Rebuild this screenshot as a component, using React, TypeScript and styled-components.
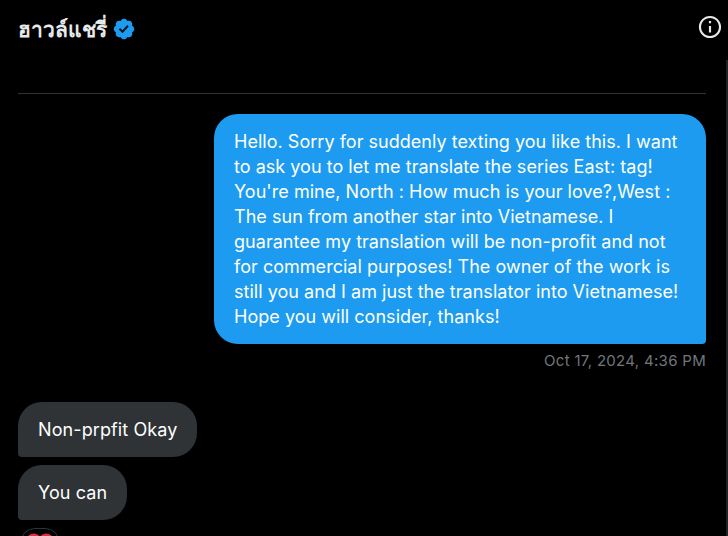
import React from "react"
import styled, { createGlobalStyle } from "styled-components"

const GlobalStyle = createGlobalStyle`
  html, body {
    margin: 0;
    height: 100%;
    overflow: hidden;
    background: #000;
  }
`

const Page = styled.div`
  position: relative;
  width: 728px;
  height: 536px;
  overflow: hidden;
  box-sizing: border-box;
  padding: 0 22px 0 18px;
  background: #000;
  font-family: Inter, "Liberation Sans", sans-serif;
  color: #e7e9ea;
`

const ScrollThumb = styled.div`
  position: absolute;
  top: 60px;
  right: 0;
  bottom: 0;
  width: 2px;
  background: #222327;
`

const Header = styled.header`
  height: 94px;
  box-sizing: border-box;
  padding-top: 15px;
  display: flex;
  justify-content: space-between;
  align-items: flex-start;
  border-bottom: 1px solid #2f3336;
`

const Name = styled.div`
  display: flex;
  align-items: center;
  gap: 5px;
  height: 28px;
  font-family: "Noto Sans", "DejaVu Sans", sans-serif;
  font-size: 21px;
  font-weight: 700;
  color: #e7e9ea;
`

const InfoButton = styled.div`
  width: 26px;
  height: 26px;
  margin: -1px -17px 0 0;
  color: #e7e9ea;
`

const Thread = styled.div`
  display: flex;
  flex-direction: column;
  padding-top: 20px;
`

const Bubble = styled.div<{ $mine?: boolean }>`
  box-sizing: border-box;
  padding: 15px 20px;
  font-size: 18px;
  line-height: 25px;
  letter-spacing: ${p => (p.$mine ? "0.03px" : "0.1px")};
  border-radius: 24px;
  color: #fff;
  width: fit-content;
  background: ${p => (p.$mine ? "#1d9bf0" : "#2f3336")};
  ${p => (p.$mine ? "align-self: flex-end; width: 492px; border-bottom-right-radius: 4px;" : "border-bottom-left-radius: 4px;")}
`

const Time = styled.div`
  align-self: flex-end;
  margin: 8px 0 32px;
  font-size: 15px;
  line-height: 18px;
  letter-spacing: 0.3px;
  color: #71767b;
`

const Incoming = styled.div`
  display: flex;
  flex-direction: column;
  gap: 8px;
`

const Reaction = styled.div`
  width: 40px;
  height: 30px;
  margin-left: 2px;
  box-sizing: border-box;
  border: 1px solid #2f3336;
  border-radius: 16px;
  display: flex;
  justify-content: center;
  padding-top: 3px;
`

const VerifiedBadge = () => (
  <svg width="24" height="24" viewBox="0 0 22 22" aria-label="Verified">
    <path
      fill="#1d9bf0"
      d="M20.396 11c-.018-.646-.215-1.275-.57-1.816-.354-.54-.852-.972-1.438-1.246.223-.607.27-1.264.14-1.897-.131-.634-.437-1.218-.882-1.687-.47-.445-1.053-.75-1.687-.882-.633-.13-1.29-.083-1.897.14-.273-.587-.704-1.086-1.245-1.44S11.647 1.62 11 1.604c-.646.017-1.273.213-1.813.568s-.969.854-1.24 1.44c-.608-.223-1.267-.272-1.902-.14-.635.13-1.22.436-1.69.882-.445.47-.749 1.055-.878 1.688-.13.633-.08 1.29.144 1.896-.587.274-1.087.705-1.443 1.245-.356.54-.555 1.17-.574 1.817.02.647.218 1.276.574 1.817.356.54.856.972 1.443 1.245-.224.606-.274 1.263-.144 1.896.13.634.433 1.218.877 1.688.47.443 1.054.747 1.687.878.633.132 1.29.084 1.897-.136.274.586.705 1.084 1.246 1.439.54.354 1.17.551 1.816.569.647-.016 1.276-.213 1.817-.567s.972-.854 1.245-1.44c.604.239 1.266.296 1.903.164.636-.132 1.22-.447 1.68-.907.46-.46.776-1.044.908-1.681s.075-1.299-.165-1.903c.586-.274 1.084-.705 1.439-1.246.354-.54.551-1.17.569-1.816z"
    />
    <path
      fill="#0f1419"
      d="M9.662 14.85l-3.429-3.428 1.293-1.302 2.072 2.072 4.4-4.794 1.347 1.246z"
    />
  </svg>
)

const InfoIcon = () => (
  <svg width="26" height="26" viewBox="0 0 24 24" fill="currentColor">
    <path d="M1.751 12c0-5.661 4.588-10.25 10.249-10.25S22.25 6.339 22.25 12 17.661 22.250 12 22.250 1.751 17.661 1.751 12zM12 3.750c-4.556 0-8.249 3.694-8.249 8.250s3.693 8.250 8.249 8.250 8.250-3.694 8.250-8.250S16.556 3.750 12 3.750zM13 17h-2v-6h2v6zm0-8.500h-2v-2h2v2z" />
  </svg>
)

const Heart = () => (
  <svg width="28" height="28" viewBox="0 0 36 36">
    <path
      fill="#dd2e44"
      d="M35.885 11.833c0-5.45-4.418-9.868-9.867-9.868-3.308 0-6.227 1.633-8.018 4.129-1.791-2.496-4.71-4.129-8.017-4.129-5.45 0-9.868 4.417-9.868 9.868 0 .772.098 1.52.266 2.241C1.751 22.587 11.216 31.568 18 34.034c6.783-2.466 16.249-11.447 17.617-19.959.17-.721.268-1.469.268-2.242z"
    />
  </svg>
)

export default function App() {
  return (
    <Page>
      <GlobalStyle />
      <Header>
        <Name>
          ฮาวล์แชรี่
          <VerifiedBadge />
        </Name>
        <InfoButton>
          <InfoIcon />
        </InfoButton>
      </Header>
      <Thread>
        <Bubble $mine>
          Hello. Sorry for suddenly texting you like this. I want to ask you to
          let me translate the series East: tag! You're mine, North : How much
          is your love?,West : The sun from another star into Vietnamese. I
          guarantee my translation will be non-profit and not for commercial
          purposes! The owner of the work is still you and I am just the
          translator into Vietnamese! Hope you will consider, thanks!
        </Bubble>
        <Time>Oct 17, 2024, 4:36 PM</Time>
        <Incoming>
          <Bubble>Non-prpfit Okay</Bubble>
          <Bubble>You can</Bubble>
          <Reaction>
            <Heart />
          </Reaction>
        </Incoming>
      </Thread>
      <ScrollThumb />
    </Page>
  )
}
